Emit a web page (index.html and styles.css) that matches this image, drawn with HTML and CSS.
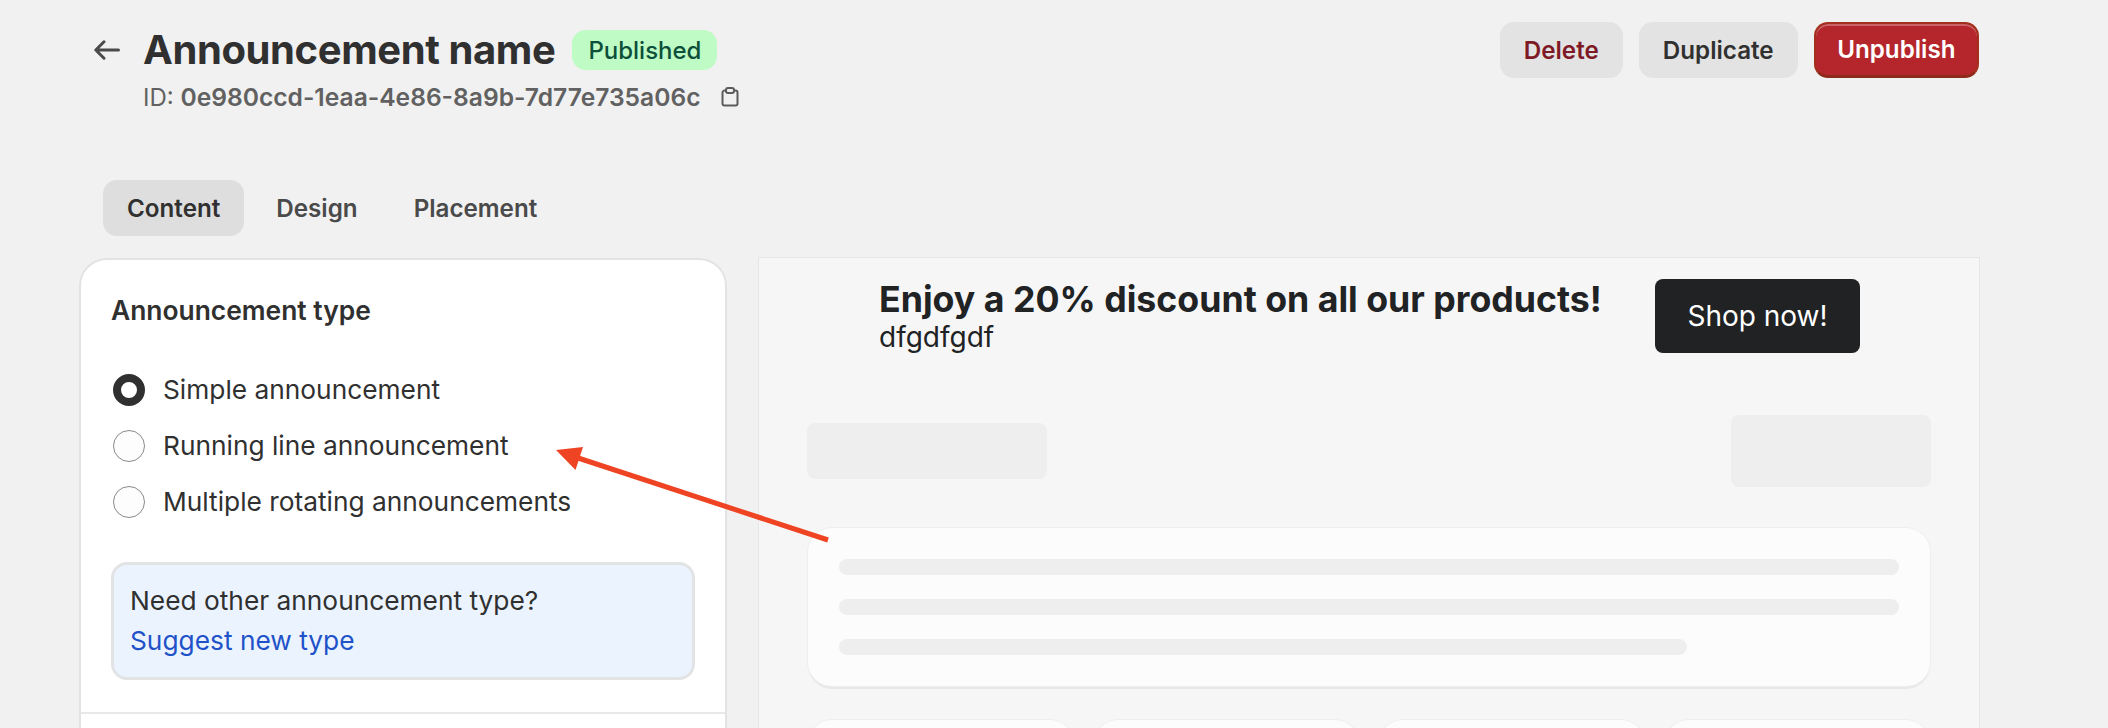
FILE: index.html
```html
<!DOCTYPE html>
<html lang="en">
<head>
    <meta charset="UTF-8">
    <meta name="viewport" content="width=device-width, initial-scale=1.0">
    <title>Announcement name</title>
    <link rel="stylesheet" href="styles.css">
</head>
<body>
    <div class="page">
        <header class="page-header">
            <div class="title-block">
                <div class="title-row">
                    <button class="back" aria-label="Back">
                        <svg width="26" height="20" viewBox="0 0 26 20" fill="none" stroke="#4a4a4a" stroke-width="3" stroke-linecap="round" stroke-linejoin="round">
                            <path d="M24.5 10H2M10 1.8L1.8 10l8.2 8.2"/>
                        </svg>
                    </button>
                    <h1>Announcement name</h1>
                    <span class="badge">Published</span>
                </div>
                <div class="meta">
                    <span>ID: <strong>0e980ccd-1eaa-4e86-8a9b-7d77e735a06c</strong></span>
                    <svg class="copy" width="18" height="20" viewBox="0 0 18 20" fill="none" stroke="#5c5c5c" stroke-width="2" stroke-linejoin="round">
                        <path d="M5 3.5H3.5A2 2 0 0 0 1.5 5.5v11a2 2 0 0 0 2 2h11a2 2 0 0 0 2-2v-11a2 2 0 0 0-2-2H13"/>
                        <rect x="5" y="1" width="8" height="5" rx="2"/>
                    </svg>
                </div>
            </div>
            <div class="actions">
                <button class="btn btn-delete">Delete</button>
                <button class="btn">Duplicate</button>
                <button class="btn btn-primary">Unpublish</button>
            </div>
        </header>

        <nav class="tabs">
            <a class="tab active">Content</a>
            <a class="tab">Design</a>
            <a class="tab">Placement</a>
        </nav>

        <main class="columns">
            <section class="card">
                <div class="card-section">
                    <h2>Announcement type</h2>
                    <div class="radios">
                        <label class="radio-row"><span class="radio checked"></span>Simple announcement</label>
                        <label class="radio-row"><span class="radio"></span>Running line announcement</label>
                        <label class="radio-row"><span class="radio"></span>Multiple rotating announcements</label>
                    </div>
                    <div class="info">
                        <p>Need other announcement type?</p>
                        <a class="info-link">Suggest new type</a>
                    </div>
                </div>
                <div class="card-section next"></div>
            </section>

            <section class="preview">
                <div class="banner">
                    <div class="banner-text">
                        <div class="banner-title">Enjoy a 20% discount on all our products!</div>
                        <div class="banner-sub">dfgdfgdf</div>
                    </div>
                    <button class="shop">Shop now!</button>
                </div>
                <div class="skeleton-head">
                    <div class="skeleton block-a"></div>
                    <div class="skeleton block-b"></div>
                </div>
                <div class="skeleton-card">
                    <div class="skeleton line"></div>
                    <div class="skeleton line"></div>
                    <div class="skeleton line short"></div>
                </div>
                <div class="skeleton-grid">
                    <div class="skeleton-tile"></div>
                    <div class="skeleton-tile"></div>
                    <div class="skeleton-tile"></div>
                    <div class="skeleton-tile"></div>
                </div>
            </section>
        </main>
    </div>

    <!-- red annotation arrow drawn over the screenshot -->
    <svg class="annotation" width="2108" height="728" viewBox="0 0 2108 728">
        <path d="M828 540L572 456" stroke="#ef4423" stroke-width="5" fill="none"/>
        <path d="M556 450L583 447L575.5 470Z" fill="#ef4423"/>
    </svg>
</body>
</html>
```

FILE: styles.css
```css
* {
    box-sizing: border-box;
}

html, body {
    margin: 0;
    height: 100%;
}

body {
    background: #f1f1f1;
    color: #303030;
    font-family: Inter, "Noto Sans", sans-serif;
    overflow: hidden;
    position: relative;
}

button {
    font-family: inherit;
    border: none;
    cursor: pointer;
}

h1, h2, p {
    margin: 0;
}

.page {
    height: 728px;
    padding: 22px 128px 0 79px;
    overflow: hidden;
}

.page-header {
    display: flex;
    justify-content: space-between;
    align-items: flex-start;
    height: 136px;
}

.title-block {
    padding: 8px 0 0 15px;
}

.title-row {
    display: flex;
    align-items: center;
    height: 40px;
}

.back {
    display: flex;
    padding: 0;
    margin-right: 23px;
    background: none;
}

h1 {
    font-size: 40px;
    font-weight: 700;
    line-height: 40px;
    letter-spacing: -0.4px;
}

.badge {
    margin-left: 17px;
    height: 40px;
    padding: 0 16px;
    display: flex;
    align-items: center;
    border-radius: 14px;
    background: #bffbc4;
    color: #0c4f3a;
    font-size: 24px;
    font-weight: 500;
}

.meta {
    display: flex;
    align-items: center;
    height: 32px;
    margin: 11px 0 0 49px;
    font-size: 24px;
    line-height: 32px;
    color: #616161;
}

.meta strong {
    font-size: 24.6px;
    font-weight: 600;
}

.copy {
    margin-left: 21px;
}

.actions {
    display: flex;
    gap: 16px;
    margin-right: 1px;
}

.btn {
    height: 56px;
    padding: 0 24px;
    border-radius: 14px;
    background: #e3e3e3;
    color: #303030;
    font-size: 24.2px;
    font-weight: 600;
}

.btn-delete {
    color: #7e1a26;
}

.btn-primary {
    padding: 0 21.5px;
    background: #b5262c;
    color: #fff;
    border: 2px solid #a3301f;
    border-bottom: 3px solid #8e2a1c;
    box-shadow: inset 0 2px 0 rgba(255, 255, 255, 0.28);
}

.tabs {
    display: flex;
    gap: 8px;
    height: 56px;
    margin: 22px 0 21px 24px;
}

.tab {
    display: flex;
    align-items: center;
    padding: 0 24px;
    border-radius: 14px;
    font-size: 24.2px;
    font-weight: 600;
    color: #4a4a4a;
}

.tab.active {
    background: #dedede;
    color: #303030;
}

.columns {
    display: flex;
    gap: 31px;
    align-items: flex-start;
}

.card {
    width: 648px;
    height: 600px;
    flex-shrink: 0;
    margin-top: 1px;
    background: #fff;
    border: 2px solid #e3e3e3;
    border-radius: 28px;
}

.card-section {
    padding: 34px 30px 32px;
    border-bottom: 2px solid #e8e8e8;
}

.card-section.next {
    border-bottom: none;
}

h2 {
    font-size: 26.4px;
    font-weight: 600;
    line-height: 32px;
}

.radios {
    display: flex;
    flex-direction: column;
    gap: 24px;
    margin-top: 48px;
    padding-left: 2px;
}

.radio-row {
    display: flex;
    align-items: center;
    gap: 18px;
    font-size: 26.3px;
    line-height: 32px;
    color: #303030;
}

.radio {
    width: 32px;
    height: 32px;
    border-radius: 50%;
    border: 1px solid #8a8a8a;
    background: #fdfdfd;
}

.radio.checked {
    border: 8px solid #303030;
    background: #fff;
}

.info {
    height: 118px;
    margin-top: 44px;
    padding: 16px 16px;
    background: #ebf4fe;
    border: 3px solid #e2e3e5;
    border-radius: 16px;
    font-size: 26.3px;
    line-height: 40px;
}

.info-link {
    color: #1f52c9;
}

.preview {
    flex: 1;
    height: 600px;
    background: #f6f6f6;
    border: 1px solid #e6e6e6;
}

.banner {
    display: flex;
    justify-content: space-between;
    padding: 21px 119px 0 120px;
}

.banner-title {
    font-size: 35.7px;
    font-weight: 700;
    line-height: 41px;
    color: #202224;
}

.banner-sub {
    font-size: 28px;
    line-height: 34px;
    color: #202224;
}

.shop {
    width: 205px;
    height: 74px;
    border-radius: 8px;
    background: #202224;
    color: #fff;
    font-size: 28px;
}

.skeleton {
    background: #eeeeee;
    border-radius: 8px;
}

.skeleton-head {
    display: flex;
    justify-content: space-between;
    align-items: center;
    height: 72px;
    margin-top: 61px;
    padding: 0 48px;
}

.block-a {
    width: 240px;
    height: 56px;
}

.block-b {
    width: 200px;
    height: 72px;
}

.skeleton-card {
    display: flex;
    flex-direction: column;
    gap: 24px;
    height: 158px;
    margin: 41px 49px 0;
    padding: 31px 31px 0;
    background: #fcfcfc;
    border-radius: 24px;
    box-shadow: 0 0 0 1px #eeeeee, 0 3px 0 #e8e8e8;
}

.line {
    height: 16px;
}

.line.short {
    width: 848px;
}

.skeleton-grid {
    display: grid;
    grid-template-columns: repeat(4, 1fr);
    gap: 20px;
    margin: 34px 49px 0;
}

.skeleton-tile {
    height: 120px;
    background: #fcfcfc;
    border-radius: 24px;
    box-shadow: 0 0 0 1px #eeeeee;
}

.annotation {
    position: absolute;
    top: 0;
    left: 0;
    pointer-events: none;
}
```
